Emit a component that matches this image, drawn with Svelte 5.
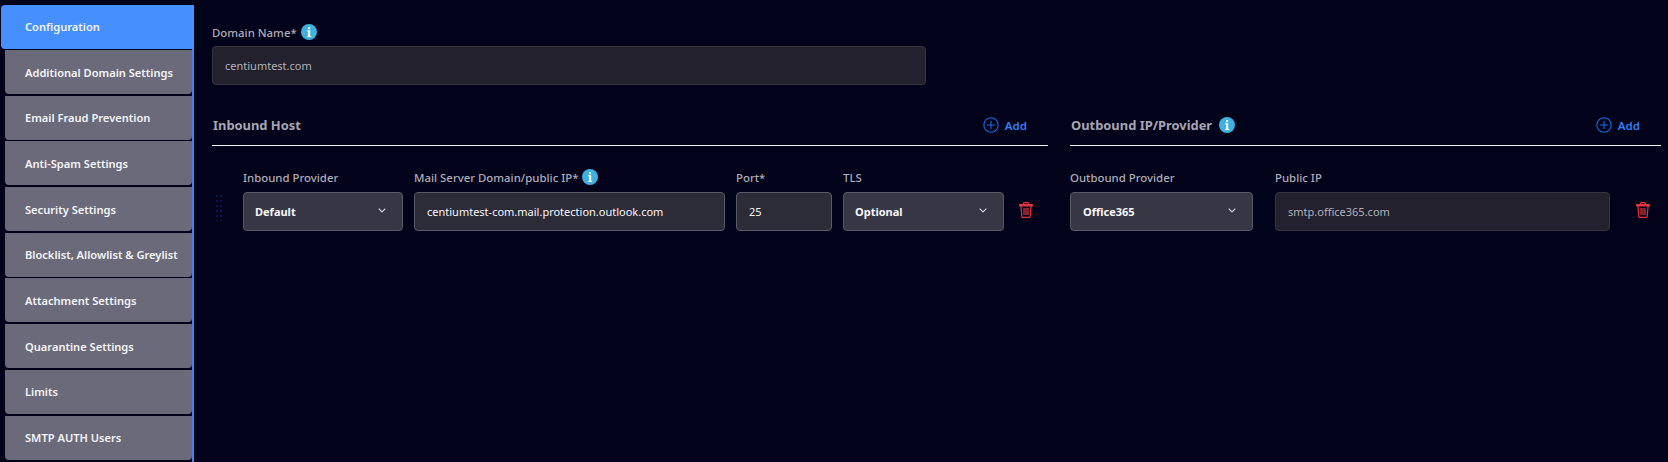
<script>
  // Domain settings page: side tabs plus the inbound and outbound host rows.
  const tabs = [
    'Configuration',
    'Additional Domain Settings',
    'Email Fraud Prevention',
    'Anti-Spam Settings',
    'Security Settings',
    'Blocklist, Allowlist & Greylist',
    'Attachment Settings',
    'Quarantine Settings',
    'Limits',
    'SMTP AUTH Users'
  ];
  const active = 'Configuration';
  const dots = Array.from({ length: 12 }, (_, i) => ({ x: (i % 2) * 4, y: Math.floor(i / 2) * 5 }));
</script>

{#snippet info()}
  <svg class="info" width="16" height="16" viewBox="0 0 16 16" aria-hidden="true">
    <circle cx="8" cy="8" r="8" fill="#3eb1de" />
    <rect x="7" y="3" width="2.2" height="2.2" rx="1" fill="#fff" />
    <rect x="7" y="6.3" width="2.2" height="6.7" fill="#fff" />
    <rect x="6" y="6.3" width="2" height="1" fill="#fff" />
    <rect x="6" y="12" width="4.2" height="1" fill="#fff" />
  </svg>
{/snippet}

{#snippet add()}
  <button class="add" type="button">
    <svg width="16" height="16" viewBox="0 0 16 16" fill="none" stroke="#0f6fe8" stroke-width="1.1" aria-hidden="true">
      <circle cx="8" cy="8" r="7.2" />
      <path d="M8 4v8M4 8h8" />
    </svg>
    <span>Add</span>
  </button>
{/snippet}

{#snippet chevron()}
  <svg class="chevron" width="8" height="5" viewBox="0 0 8 5" fill="none" stroke="#d4d3da" stroke-width="1.1" aria-hidden="true">
    <path d="M.7.7L4 4l3.3-3.3" />
  </svg>
{/snippet}

{#snippet trash()}
  <svg class="trash" width="14" height="16" viewBox="0 0 14 16" fill="none" stroke="#e5343f" stroke-width="1.2" aria-hidden="true">
    <path d="M4.6 2.2V1.4c0-.4.3-.8.8-.8h3.2c.5 0 .8.4.8.8v.8" />
    <path d="M.7 2.6h12.6v1.3H.7z" />
    <path d="M1.9 4l.9 10.4c0 .6.4 1 1 1h6.4c.6 0 1-.4 1-1L12.1 4" />
    <path d="M5 6v7M7 6v7M9 6v7" />
  </svg>
{/snippet}

<div class="page">
  <nav class="tabs">
    {#each tabs as tab}
      <div class="tab" class:active={tab === active}>{tab}</div>
    {/each}
  </nav>

  <main class="content">
    <div class="field domain">
      <div class="label">Domain Name* {@render info()}</div>
      <div class="input">centiumtest.com</div>
    </div>

    <div class="sections">
      <section>
        <header class="section-head">
          <h2>Inbound Host</h2>
          {@render add()}
        </header>
        <div class="row">
          <svg class="drag" width="6" height="26" viewBox="0 0 6 26" aria-hidden="true">
            {#each dots as d}
              <rect x={d.x} y={d.y} width="2" height="2" fill="#0e1658" />
            {/each}
          </svg>
          <div class="field w-provider">
            <div class="label">Inbound Provider</div>
            <div class="select">Default {@render chevron()}</div>
          </div>
          <div class="field w-host">
            <div class="label">Mail Server Domain/public IP* {@render info()}</div>
            <div class="input filled">centiumtest-com.mail.protection.outlook.com</div>
          </div>
          <div class="field w-port">
            <div class="label">Port*</div>
            <div class="input filled">25</div>
          </div>
          <div class="field w-tls">
            <div class="label">TLS</div>
            <div class="select">Optional {@render chevron()}</div>
          </div>
          {@render trash()}
        </div>
      </section>

      <section>
        <header class="section-head">
          <h2>Outbound IP/Provider {@render info()}</h2>
          {@render add()}
        </header>
        <div class="row outbound">
          <div class="field w-out">
            <div class="label">Outbound Provider</div>
            <div class="select">Office365 {@render chevron()}</div>
          </div>
          <div class="field w-ip">
            <div class="label">Public IP</div>
            <div class="input">smtp.office365.com</div>
          </div>
          {@render trash()}
        </div>
      </section>
    </div>
  </main>
</div>

<style>
  :global(body) {
    background: #02021a;
  }

  .page {
    display: flex;
    height: 462px;
    overflow: hidden;
    background: #02021a;
    font-family: "Noto Sans", sans-serif;
    font-size: 11px;
  }

  .tabs {
    width: 194px;
    flex: none;
    box-sizing: border-box;
    padding: 5px 2px 0 5px;
    position: relative;
  }

  .tabs::after {
    content: '';
    position: absolute;
    right: 0;
    top: 49px;
    bottom: 0;
    width: 2px;
    background: #3f86ee;
  }

  .tab {
    height: 44px;
    margin-bottom: 1.7px;
    padding: 0 0 0 20px;
    display: flex;
    align-items: center;
    box-sizing: border-box;
    background: #6b6a7a;
    border-radius: 0 0 4px 4px;
    color: #f4f4f6;
    font-size: 11.1px;
    font-weight: 600;
    white-space: nowrap;
  }

  .tab.active {
    margin-left: -4px;
    margin-right: -2px;
    margin-bottom: 1px;
    padding: 0 0 1px 24px;
    background: #458fff;
    border-radius: 4px 0 0 4px;
  }

  .content {
    flex: 1;
    padding: 24px 7px 0 18px;
    min-width: 0;
  }

  .field {
    display: flex;
    flex-direction: column;
    flex: none;
  }

  .label {
    display: flex;
    align-items: center;
    gap: 4px;
    height: 16px;
    margin-bottom: 6px;
    color: #aeadb8;
    font-size: 11.4px;
    font-weight: 500;
    white-space: nowrap;
  }

  .input,
  .select {
    display: flex;
    align-items: center;
    box-sizing: border-box;
    height: 39px;
    padding: 0 12px;
    border: 1px solid #363541;
    border-radius: 4px;
    background: #22212d;
    color: #b2b1bb;
    white-space: nowrap;
  }

  .input.filled {
    background: #2c2b38;
    border-color: #5a5967;
    color: #f7f7f9;
  }

  .select {
    justify-content: space-between;
    padding: 0 16px 0 11px;
    background: #373644;
    border-color: #5a5967;
    color: #f7f7f9;
    font-weight: 700;
  }

  .outbound .select {
    padding-left: 12px;
  }

  .chevron {
    margin-bottom: 2px;
  }

  .domain {
    width: 714px;
  }

  .sections {
    display: grid;
    grid-template-columns: 836px 591px;
    gap: 22px;
    margin-top: 22px;
  }

  .section-head {
    display: flex;
    align-items: center;
    justify-content: space-between;
    height: 36px;
    padding: 0 21px 2px 0;
    border-bottom: 1px solid #f2f2f4;
  }

  h2 {
    display: flex;
    align-items: center;
    gap: 7px;
    margin: 0;
    padding-left: 1px;
    color: #a7a6b2;
    font-size: 12.9px;
    font-weight: 700;
  }

  .info {
    flex: none;
  }

  .add {
    display: flex;
    align-items: center;
    gap: 6px;
    padding: 0;
    border: 0;
    background: none;
    color: #2f80f2;
    font: 600 11.5px "Noto Sans", sans-serif;
  }

  .row {
    display: flex;
    align-items: flex-end;
    gap: 11px;
    margin-top: 23px;
    padding-left: 31px;
    position: relative;
  }

  .row .label {
    margin-bottom: 7px;
  }

  .row.outbound {
    padding-left: 0;
    gap: 22px;
  }

  .drag {
    position: absolute;
    left: 4px;
    bottom: 10px;
  }

  .w-provider { width: 160px; }
  .w-host { width: 311px; }
  .w-port { width: 96px; }
  .w-tls { width: 161px; }
  .w-out { width: 183px; }
  .w-ip { width: 335px; }

  .trash {
    flex: none;
    margin: 0 0 13px 4px;
  }

  .row.outbound .trash {
    margin-left: 4px;
  }
</style>
